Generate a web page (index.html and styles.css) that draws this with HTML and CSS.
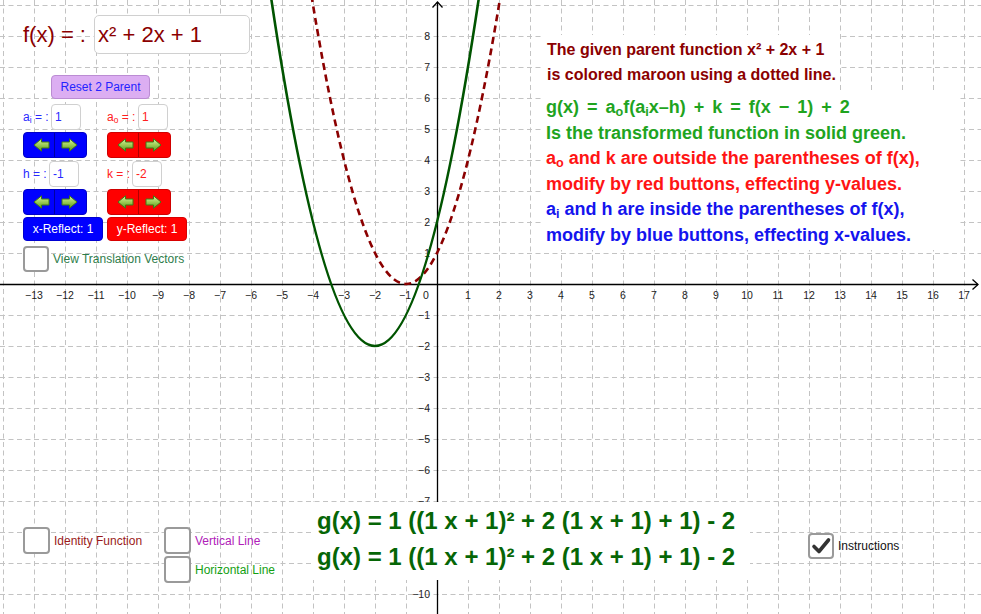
FILE: index.html
```html
<!DOCTYPE html>
<html>
<head>
<meta charset="utf-8">
<title>Transformations of a parent function</title>
<link rel="stylesheet" href="styles.css">
</head>
<body>
<div class="applet">
  <svg class="plot" width="981" height="614" viewBox="0 0 981 614">
    <path class="grid" d="M3.5 0V614M34.5 0V614M65.5 0V614M96.5 0V614M127.5 0V614M158.5 0V614M189.5 0V614M220.5 0V614M251.5 0V614M282.5 0V614M313.5 0V614M344.5 0V614M375.5 0V614M406.5 0V614M468.5 0V614M499.5 0V614M530.5 0V614M561.5 0V614M592.5 0V614M623.5 0V614M654.5 0V614M685.5 0V614M716.5 0V614M747.5 0V614M778.5 0V614M809.5 0V614M840.5 0V614M871.5 0V614M902.5 0V614M933.5 0V614M964.5 0V614"/>
    <path class="grid" d="M0 5.5H981M0 36.5H981M0 67.5H981M0 98.5H981M0 129.5H981M0 160.5H981M0 191.5H981M0 222.5H981M0 253.5H981M0 315.5H981M0 346.5H981M0 377.5H981M0 408.5H981M0 439.5H981M0 470.5H981M0 501.5H981M0 532.5H981M0 563.5H981M0 594.5H981"/>
    <g class="tick-label xl">
      <text x="34" y="299">−13</text><text x="65" y="299">−12</text><text x="96" y="299">−11</text>
      <text x="127" y="299">−10</text><text x="158" y="299">−9</text><text x="189" y="299">−8</text>
      <text x="220" y="299">−7</text><text x="251" y="299">−6</text><text x="282" y="299">−5</text>
      <text x="313" y="299">−4</text><text x="344" y="299">−3</text><text x="375" y="299">−2</text>
      <text x="405" y="299">−1</text><text x="426" y="299">0</text>
      <text x="468" y="299">1</text><text x="499" y="299">2</text><text x="530" y="299">3</text>
      <text x="561" y="299">4</text><text x="592" y="299">5</text><text x="623" y="299">6</text>
      <text x="654" y="299">7</text><text x="685" y="299">8</text><text x="716" y="299">9</text>
      <text x="747" y="299">10</text><text x="778" y="299">11</text><text x="809" y="299">12</text>
      <text x="840" y="299">13</text><text x="871" y="299">14</text><text x="902" y="299">15</text>
      <text x="933" y="299">16</text><text x="964" y="299">17</text>
    </g>
    <g class="tick-label yl">
      <text x="430" y="40">8</text><text x="430" y="71">7</text><text x="430" y="102">6</text>
      <text x="430" y="133">5</text><text x="430" y="164">4</text><text x="430" y="195">3</text>
      <text x="430" y="226">2</text><text x="430" y="257">1</text>
      <text x="430" y="319">−1</text><text x="430" y="350">−2</text><text x="430" y="381">−3</text>
      <text x="430" y="412">−4</text><text x="430" y="443">−5</text><text x="430" y="474">−6</text>
      <text x="430" y="505">−7</text>
      <text x="430" y="598">−10</text>
    </g>
    <path class="axis" d="M0 284.5H978M437.5 614V2"/>
    <path class="axis" d="M972.5 279.5L978 284.5L972.5 289.5M432.5 7.5L437.5 2L442.5 7.5"/>
    <path class="parent" d="M311.35 -5Q406 573 500.65 -5"/>
    <path class="trans" d="M270.69 -5Q375 697 479.31 -5"/>
  </svg>

  <div class="fx">
    <span class="fx-label">f(x) = :</span>
    <div class="fx-input">x² + 2x + 1</div>
  </div>

  <div class="panel">
    <div class="reset">Reset 2 Parent</div>

    <div class="row r-a">
      <div class="cell"><span class="lbl c-blue w28">a<sub>i</sub> = :</span><span class="field c-blue">1</span></div>
      <div class="cell"><span class="lbl c-red w31">a<sub>o</sub> = :</span><span class="field c-red">1</span></div>
    </div>

    <div class="row r-arrows1">
      <div class="pair bg-blue">
        <span class="half-l"><svg class="arr" width="17" height="14" viewBox="0 0 17 14"><use href="#arrow-left"/></svg></span>
        <span class="half-r"><svg class="arr" width="17" height="14" viewBox="0 0 17 14"><use href="#arrow-right"/></svg></span>
      </div>
      <div class="pair bg-red">
        <span class="half-l"><svg class="arr" width="17" height="14" viewBox="0 0 17 14"><use href="#arrow-left"/></svg></span>
        <span class="half-r"><svg class="arr" width="17" height="14" viewBox="0 0 17 14"><use href="#arrow-right"/></svg></span>
      </div>
    </div>

    <div class="row r-h">
      <div class="cell"><span class="lbl c-blue w26">h = :</span><span class="field c-blue">-1</span></div>
      <div class="cell"><span class="lbl c-red w25">k = :</span><span class="field c-red">-2</span></div>
    </div>

    <div class="row r-arrows2">
      <div class="pair bg-blue">
        <span class="half-l"><svg class="arr" width="17" height="14" viewBox="0 0 17 14"><use href="#arrow-left"/></svg></span>
        <span class="half-r"><svg class="arr" width="17" height="14" viewBox="0 0 17 14"><use href="#arrow-right"/></svg></span>
      </div>
      <div class="pair bg-red">
        <span class="half-l"><svg class="arr" width="17" height="14" viewBox="0 0 17 14"><use href="#arrow-left"/></svg></span>
        <span class="half-r"><svg class="arr" width="17" height="14" viewBox="0 0 17 14"><use href="#arrow-right"/></svg></span>
      </div>
    </div>

    <div class="row r-reflect">
      <div class="reflect bg-blue">x-Reflect: 1</div>
      <div class="reflect bg-red">y-Reflect: 1</div>
    </div>

    <div class="check-item r-vectors">
      <span class="box"></span><span class="check-label c-teal">View Translation Vectors</span>
    </div>
  </div>

  <div class="notes">
    <div class="note-parent">
      <div>The given parent function x² + 2x + 1</div>
      <div>is colored maroon using a dotted line.</div>
    </div>
    <div class="note-math">
      <div class="eq c-lgreen">g(x) <span class="op">=</span> a<sub>o</sub>f(a<sub>i</sub>x–h) <span class="op">+</span> k <span class="op">=</span> f(x <span class="op">−</span> 1) <span class="op">+</span> 2</div>
      <div class="c-lgreen">Is the transformed function in solid green.</div>
      <div class="c-lred">a<sub>o</sub> and k are outside the parentheses of f(x),</div>
      <div class="c-lred">modify by red buttons, effecting y-values.</div>
      <div class="c-lblue">a<sub>i</sub> and h are inside the parentheses of f(x),</div>
      <div class="c-lblue">modify by blue buttons, effecting x-values.</div>
    </div>
  </div>

  <div class="gbox">
    <div>g(x) = 1 ((1 x + 1)² + 2 (1 x + 1) + 1) - 2</div>
    <div>g(x) = 1 ((1 x + 1)² + 2 (1 x + 1) + 1) - 2</div>
  </div>

  <div class="toggles">
    <div class="check-item t-identity"><span class="box"></span><span class="check-label c-maroon">Identity Function</span></div>
    <div class="check-item t-vertical"><span class="box"></span><span class="check-label c-purple">Vertical Line</span></div>
    <div class="check-item t-horizontal"><span class="box"></span><span class="check-label c-green">Horizontal Line</span></div>
  </div>

  <div class="check-item instructions">
    <span class="box"><svg width="22" height="22" viewBox="0 0 22 22"><path class="tick" d="M4 11.5L9 16.5L18.5 5"/></svg></span>
    <span class="check-label">Instructions</span>
  </div>

  <svg class="defs" width="0" height="0">
    <defs>
      <linearGradient id="arrowFill" x1="0" y1="0" x2="0" y2="1">
        <stop offset="0" stop-color="#d8f2a8"/>
        <stop offset="0.5" stop-color="#9ccc55"/>
        <stop offset="1" stop-color="#5a9420"/>
      </linearGradient>
      <path id="arrow-right" d="M1 4H8.5V0.8L16 7L8.5 13.2V10H1Z" fill="url(#arrowFill)" stroke="#3f7a12" stroke-width="1" stroke-linejoin="round"/>
      <path id="arrow-left" d="M16 4H8.5V0.8L1 7L8.5 13.2V10H16Z" fill="url(#arrowFill)" stroke="#3f7a12" stroke-width="1" stroke-linejoin="round"/>
    </defs>
  </svg>
</div>
</body>
</html>
```

FILE: styles.css
```css
* { box-sizing: border-box; }

html, body {
  margin: 0;
  padding: 0;
  background: #fff;
}

body {
  font-family: "Liberation Sans", Arial, sans-serif;
}

.applet {
  position: relative;
  width: 981px;
  height: 614px;
  overflow: hidden;
  background: #fff;
}

.plot {
  position: absolute;
  left: 0;
  top: 0;
}

.defs {
  position: absolute;
  left: 0;
  top: 0;
}

.grid {
  fill: none;
  stroke: #c3c3c3;
  stroke-width: 1;
  stroke-dasharray: 5 3.5;
}

.axis {
  fill: none;
  stroke: #000;
  stroke-width: 1.3;
}

.tick-label {
  font-family: "Liberation Sans", Arial, sans-serif;
  font-size: 10.5px;
  fill: #222;
}

.xl { text-anchor: middle; }
.yl { text-anchor: end; }

.parent {
  fill: none;
  stroke: #8b0000;
  stroke-width: 2.6;
  stroke-dasharray: 7 4.5;
}

.trans {
  fill: none;
  stroke: #005400;
  stroke-width: 2.6;
}

/* f(x) input */
.fx {
  position: absolute;
  left: 23px;
  top: 15px;
  display: flex;
  align-items: center;
  color: #8b0000;
  font-size: 22px;
}

.fx-label {
  width: 71px;
  white-space: nowrap;
}

.fx-input {
  width: 156px;
  height: 39px;
  border: 1px solid #d0d0d0;
  border-radius: 5px;
  background: #fff;
  padding-left: 3px;
  line-height: 37px;
  white-space: nowrap;
}

/* left control panel */
.panel {
  position: absolute;
  left: 23px;
  top: 75px;
  width: 175px;
  display: flex;
  flex-direction: column;
  font-size: 12px;
}

.reset {
  margin-left: 28px;
  width: 99px;
  height: 24px;
  background: #dcaef2;
  border: 1px solid #bb8cd3;
  border-radius: 4px;
  color: #2424ff;
  display: flex;
  align-items: center;
  justify-content: center;
}

.row {
  display: grid;
  grid-template-columns: 84px auto;
}

.r-a { margin-top: 5px; }
.r-arrows1 { margin-top: 2px; }
.r-h { margin-top: 3px; }
.r-arrows2 { margin-top: 2px; }
.r-reflect { margin-top: 2px; }
.r-vectors { margin-top: 5px; }

.cell {
  display: flex;
  align-items: center;
  height: 26px;
}

.lbl {
  white-space: nowrap;
  line-height: 1;
}

.lbl sub, .note-math sub {
  font-size: 0.7em;
  vertical-align: -0.25em;
  line-height: 0;
}

.w25 { width: 25px; }
.w26 { width: 26px; }
.w28 { width: 28px; }
.w31 { width: 31px; }

.field {
  width: 30px;
  height: 26px;
  border: 1px solid #d0d0d0;
  border-radius: 4px;
  background: #fff;
  padding-left: 3px;
  line-height: 24px;
}

.pair {
  display: flex;
  width: 64px;
  height: 26px;
  border-radius: 4px;
  overflow: hidden;
}

.pair.bg-blue { border: 1px solid #0000c8; }
.pair.bg-red { border: 1px solid #d00000; }

.half-l {
  width: 30px;
  display: flex;
  align-items: center;
  justify-content: flex-end;
  padding-right: 4px;
}

.half-r {
  flex: 1;
  display: flex;
  align-items: center;
  padding-left: 6px;
}

.bg-blue .half-r { border-left: 1px solid #0000a0; }
.bg-red .half-r { border-left: 1px solid #b00000; }

.arr { display: block; }

.bg-blue { background: #0000ff; }
.bg-red { background: #ff0000; }

.reflect {
  width: 80px;
  height: 24px;
  border-radius: 4px;
  color: #fff;
  display: flex;
  align-items: center;
  justify-content: center;
}

.reflect.bg-blue { border: 1px solid #0000d0; }
.reflect.bg-red { border: 1px solid #d80000; }

/* checkboxes */
.check-item {
  display: flex;
  align-items: center;
  font-size: 12px;
  height: 26px;
}

.box {
  width: 26px;
  height: 26px;
  flex: none;
  border: 2px solid #9a9a9a;
  border-radius: 4px;
  background: #fff;
  display: flex;
  align-items: center;
  justify-content: center;
}

.check-label {
  margin-left: 4px;
  white-space: nowrap;
}

.tick {
  fill: none;
  stroke: #333;
  stroke-width: 3.6;
  stroke-linecap: round;
  stroke-linejoin: round;
}

.toggles {
  position: absolute;
  left: 23px;
  top: 527px;
  display: grid;
  grid-template-columns: 141px auto;
  grid-template-rows: 27px 27px;
  row-gap: 2px;
}

.t-identity { grid-column: 1; grid-row: 1; height: 27px; }
.t-vertical { grid-column: 2; grid-row: 1; height: 27px; }
.t-horizontal { grid-column: 2; grid-row: 2; height: 27px; }
.toggles .box { height: 27px; width: 27px; }

.instructions {
  position: absolute;
  left: 808px;
  top: 533px;
  color: #111;
}

/* colours */
.c-blue { color: #2a2aff; }
.c-red { color: #ff2020; }
.c-teal { color: #2e7d4a; }
.c-maroon { color: #9a1a1a; }
.c-purple { color: #b020b8; }
.c-green { color: #12a012; }
.c-lgreen { color: #1fa41f; }
.c-lred { color: #ff1414; }
.c-lblue { color: #1414ee; }

/* right-hand notes */
.notes {
  position: absolute;
  left: 541px;
  top: 35px;
}

.note-parent {
  width: 299px;
  height: 55px;
  background: #fff;
  padding: 2px 0 0 6px;
  color: #8b0000;
  font-weight: bold;
  font-size: 16px;
  line-height: 25px;
  white-space: nowrap;
}

.note-math {
  width: 419px;
  height: 160px;
  background: #fff;
  padding: 5px 0 0 5px;
  font-weight: bold;
  font-size: 18px;
  line-height: 25.6px;
  white-space: nowrap;
}

.eq {
  word-spacing: 1px;
}

.op {
  padding: 0 2px;
}

/* bottom formula */
.gbox {
  position: absolute;
  left: 313px;
  top: 502px;
  width: 437px;
  height: 78px;
  background: #fff;
  padding: 1px 0 0 4px;
  color: #066606;
  font-weight: bold;
  font-size: 24px;
  line-height: 36px;
  white-space: nowrap;
}
```
